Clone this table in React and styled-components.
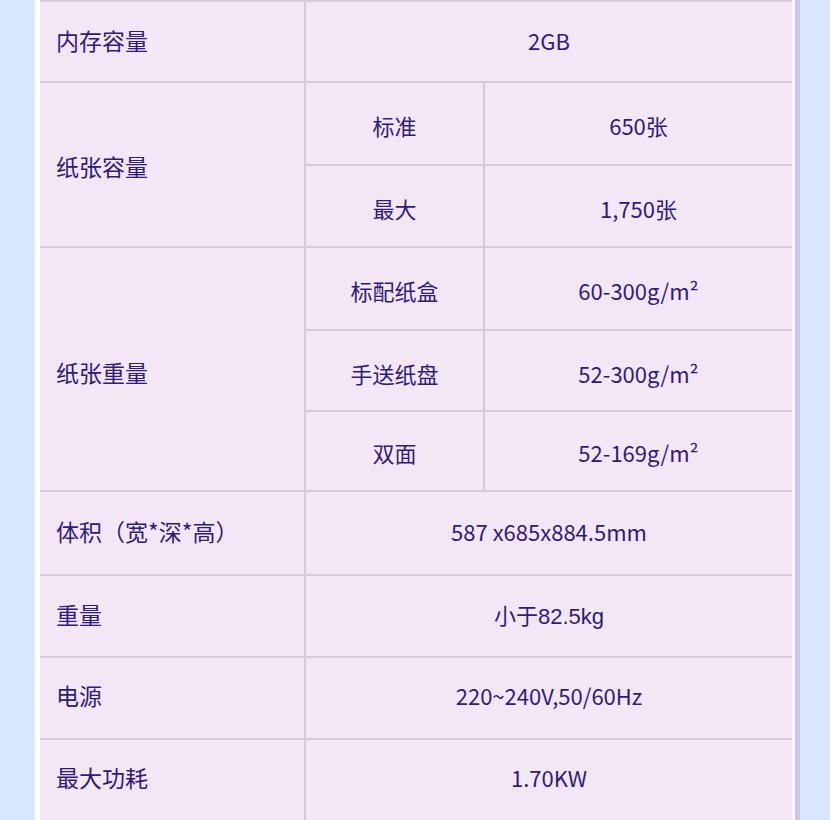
import React from "react";
import styled, { createGlobalStyle } from "styled-components";

const Global = createGlobalStyle`
  html, body { margin: 0; padding: 0; background: #d9e6ff; }
  body { font-family: "Noto Sans CJK SC", "Noto Sans", sans-serif; }
`;

const Page = styled.div`
  width: 830px;
  height: 820px;
  overflow: hidden;
  background: #d9e6ff;
  display: flex;
  padding-left: 35px;
  box-sizing: border-box;
`;

const Card = styled.div`
  display: flex;
  background: #fdf8fe;
  border-left: 5px solid #ffffff;
  border-right: 3px solid #fbf5fd;
  box-shadow: 5px 0 0 #cbc4ef, -1px 0 0 #e9eefe;
  height: 840px;
`;

const Grid = styled.div`
  display: grid;
  grid-template-columns: 264px 177px 307px;
  grid-template-rows: 79px 81px 80px 81px 79px 78px 82px 80px 80px 80px;
  column-gap: 2px;
  row-gap: 2px;
  padding-top: 2px;
  background: #d9c8dc;
  align-content: start;
  height: 840px;
  box-sizing: border-box;
`;

const Cell = styled.div`
  background: #f3e7f5;
  display: flex;
  align-items: center;
  justify-content: ${(p) => (p.$label ? "flex-start" : "center")};
  padding-left: ${(p) => (p.$label ? "16px" : "0")};
  padding-top: ${(p) => (p.$shift > 0 ? p.$shift * 2 : 0)}px;
  padding-bottom: ${(p) => (p.$shift < 0 ? -p.$shift * 2 : 0)}px;
  box-sizing: border-box;
  color: #2f1a85;
  font-size: ${(p) => (p.$label ? "23px" : "22px")};
  font-family: ${(p) =>
    p.$latin
      ? '"Liberation Sans", "Noto Sans CJK SC", sans-serif'
      : '"Noto Sans CJK SC", "Noto Sans", sans-serif'};
  white-space: nowrap;
  grid-column: ${(p) => p.$col || "auto"};
  grid-row: ${(p) => p.$row || "auto"};
`;

const rows = [
  { label: "内存容量", value: "2GB", shift: -1.5 },
  {
    label: "纸张容量",
    shift: 1,
    subs: [
      ["标准", "650张", 1.5],
      ["最大", "1,750张", 2],
    ],
  },
  {
    label: "纸张重量",
    shift: 2.5,
    subs: [
      ["标配纸盒", "60-300g/m²", 1.5],
      ["手送纸盘", "52-300g/m²", 2.5],
      ["双面", "52-169g/m²", 1],
    ],
  },
  { label: "体积（宽*深*高）", value: "587 x685x884.5mm", shift: -2.5 },
  { label: "重量", value: "小于82.5kg", latin: true, shift: -2.5 },
  { label: "电源", value: "220~240V,50/60Hz", shift: -3.5 },
  { label: "最大功耗", value: "1.70KW", shift: -3.5 },
];

export default function App() {
  let r = 1;
  const cells = [];
  rows.forEach((row, i) => {
    if (row.subs) {
      const n = row.subs.length;
      cells.push(
        <Cell key={`l${i}`} $label $shift={row.shift} $col="1" $row={`${r} / span ${n}`}>
          {row.label}
        </Cell>
      );
      row.subs.forEach(([k, v, s], j) => {
        cells.push(
          <Cell key={`k${i}-${j}`} $shift={s} $col="2" $row={`${r + j}`}>
            {k}
          </Cell>
        );
        cells.push(
          <Cell key={`v${i}-${j}`} $shift={s} $col="3" $row={`${r + j}`}>
            {v}
          </Cell>
        );
      });
      r += n;
    } else {
      cells.push(
        <Cell key={`l${i}`} $label $shift={row.shift} $col="1" $row={`${r}`}>
          {row.label}
        </Cell>
      );
      cells.push(
        <Cell
          key={`v${i}`}
          $shift={row.shift}
          $col="2 / span 2"
          $row={`${r}`}
          $latin={row.latin}
        >
          {row.value}
        </Cell>
      );
      r += 1;
    }
  });
  return (
    <>
      <Global />
      <Page>
        <Card>
          <Grid>{cells}</Grid>
        </Card>
      </Page>
    </>
  );
}
